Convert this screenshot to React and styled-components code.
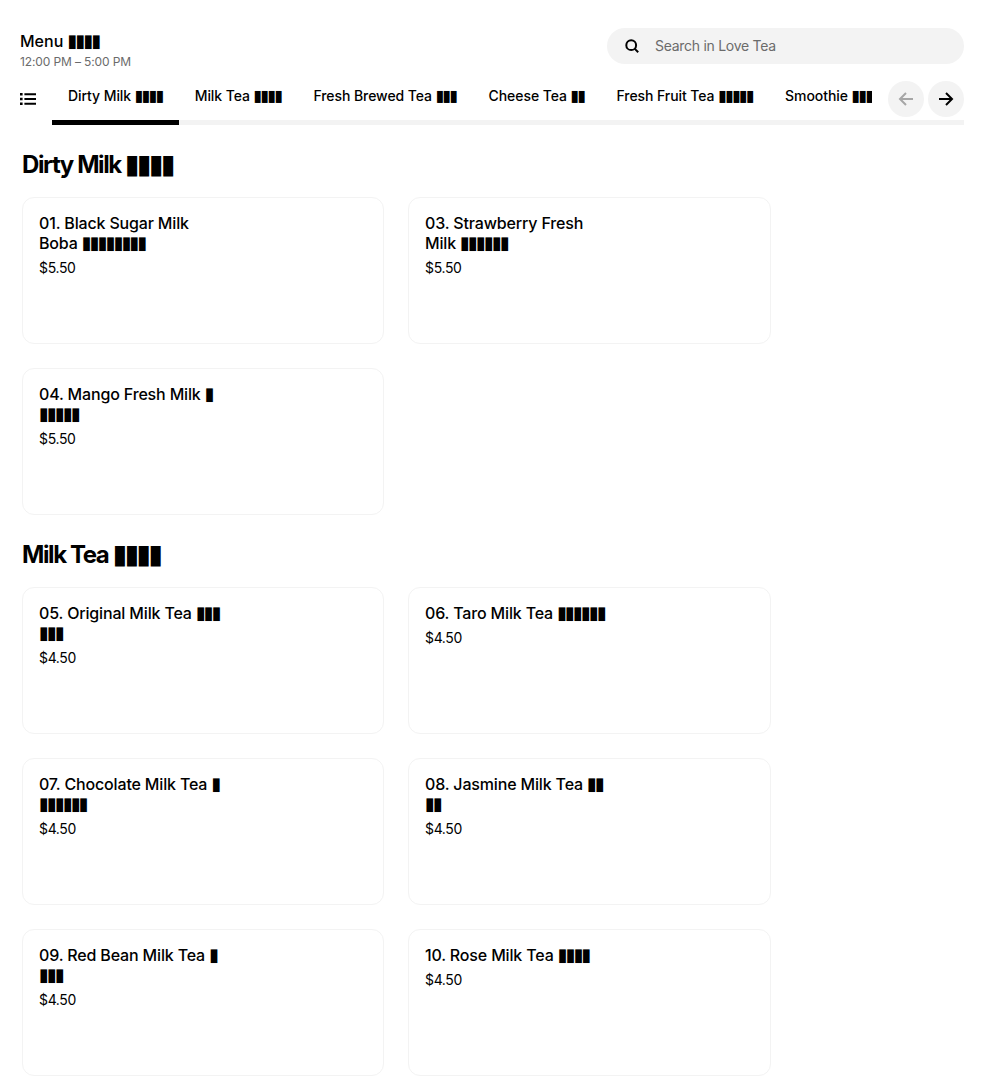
import styled, { createGlobalStyle } from "styled-components";

const GlobalStyle = createGlobalStyle`
  html, body {
    margin: 0;
    padding: 0;
    background: #fff;
    color: #000;
    font-family: "Inter", "Liberation Sans", sans-serif;
  }
`;

const Page = styled.div`
  width: 984px;
  height: 1086px;
  box-sizing: border-box;
  padding: 28px 20px 0;
  overflow: hidden;
`;

const Header = styled.header`
  display: flex;
  justify-content: space-between;
  align-items: flex-start;
  height: 53px;
`;

const Title = styled.div`
  font-size: 16px;
  line-height: 20px;
  font-weight: 500;
  margin-top: 3px;
`;

const Hours = styled.div`
  font-size: 12px;
  line-height: 16px;
  letter-spacing: -0.12px;
  color: #6b6b6b;
  margin-top: 3px;
`;

const Search = styled.div`
  width: 357px;
  height: 36px;
  border-radius: 18px;
  background: #f3f3f3;
  display: flex;
  align-items: center;
  gap: 16px;
  padding-left: 18px;
  padding-bottom: 1px;
  box-sizing: border-box;
  font-size: 14px;
  letter-spacing: -0.28px;
  color: #6b6b6b;
`;

const NavRow = styled.nav`
  display: flex;
  align-items: flex-start;
  height: 44px;
`;

const ListButton = styled.div`
  width: 32px;
  height: 36px;
  flex: none;
  display: flex;
  align-items: center;
`;

const TabArea = styled.div`
  flex: 1;
  min-width: 0;
  height: 44px;
  box-sizing: border-box;
  border-bottom: 5px solid #f3f3f3;
  display: flex;
  align-items: flex-start;
`;

const Tabs = styled.div`
  display: flex;
  flex: 1;
  min-width: 0;
  height: 44px;
  overflow: hidden;
`;

const Tab = styled.div`
  flex: none;
  height: 44px;
  padding: 7px 16px 0;
  box-sizing: border-box;
  font-size: 14px;
  line-height: 16px;
  font-weight: 500;
  letter-spacing: -0.07px;
  white-space: nowrap;
  border-bottom: 5px solid ${(p) => (p.$active ? "#000" : "transparent")};
`;

const Arrows = styled.div`
  display: flex;
  gap: 4px;
  flex: none;
  margin-left: 16px;
`;

const ArrowButton = styled.div`
  width: 36px;
  height: 36px;
  border-radius: 50%;
  background: #f3f3f3;
  display: flex;
  align-items: center;
  justify-content: center;
  color: ${(p) => (p.$disabled ? "#a6a6a6" : "#000")};
`;

const Section = styled.section`
  padding-left: 2px;
  margin-top: 24px;
`;

const Heading = styled.h2`
  margin: 0 0 16px;
  font-size: 24px;
  line-height: 32px;
  font-weight: 700;
  letter-spacing: -1.4px;
`;

const Grid = styled.div`
  display: grid;
  grid-template-columns: 362px 363px;
  gap: 24px;
`;

const Card = styled.article`
  height: 147px;
  box-sizing: border-box;
  border: 1px solid #f3f3f3;
  border-radius: 12px;
  padding: 15px 16px 16px;
`;

const ItemName = styled.div`
  max-width: 181px;
  font-size: 16px;
  line-height: 20px;
  font-weight: 500;
  letter-spacing: -0.16px;
`;

const Price = styled.div`
  margin-top: 5px;
  font-size: 14px;
  line-height: 20px;
  letter-spacing: -0.35px;
`;

const Missing = styled.span`
  font-family: "DejaVu Sans", sans-serif;
  font-size: 1.12em;
  line-height: 1;
  letter-spacing: -0.105em;
  word-break: break-all;
  font-weight: 400;
`;

const sections = [
  {
    title: "Dirty Milk ",
    blocks: 4,
    items: [
      ["01. Black Sugar Milk Boba ", 8, "$5.50"],
      ["03. Strawberry Fresh Milk ", 6, "$5.50"],
      ["04. Mango Fresh Milk ", 6, "$5.50"],
    ],
  },
  {
    title: "Milk Tea ",
    blocks: 4,
    items: [
      ["05. Original Milk Tea ", 6, "$4.50"],
      ["06. Taro Milk Tea ", 6, "$4.50"],
      ["07. Chocolate Milk Tea ", 7, "$4.50"],
      ["08. Jasmine Milk Tea ", 4, "$4.50"],
      ["09. Red Bean Milk Tea ", 4, "$4.50"],
      ["10. Rose Milk Tea ", 4, "$4.50"],
    ],
  },
];

const tabs = [
  ["Dirty Milk ", 4],
  ["Milk Tea ", 4],
  ["Fresh Brewed Tea ", 3],
  ["Cheese Tea ", 2],
  ["Fresh Fruit Tea ", 5],
  ["Smoothie ", 3],
];

const Blocks = ({ n }) => <Missing>{"▮".repeat(n)}</Missing>;

const ListIcon = () => (
  <svg width="16" height="16" viewBox="0 0 16 16" fill="currentColor">
    <path d="M0 2h2.6v2.4H0zM4.4 2.2H16v2H4.4zM0 6.8h2.6v2.4H0zM4.4 7h11.6v2H4.4zM0 11.6h2.6V14H0zM4.4 11.8H16v2H4.4z" />
  </svg>
);

const SearchIcon = () => (
  <svg width="14" height="14" viewBox="0 0 14 14" fill="none" stroke="#000" strokeWidth="2">
    <circle cx="6.2" cy="6.2" r="4.9" />
    <path d="M9.6 9.6L13.2 13.2" />
  </svg>
);

const ArrowIcon = ({ left }) => (
  <svg width="16" height="14" viewBox="0 0 16 14" fill="none" stroke="currentColor" strokeWidth="2">
    {left ? <path d="M15 7H2M8 1L2 7l6 6" /> : <path d="M1 7h13M8 1l6 6-6 6" />}
  </svg>
);

export default function App() {
  return (
    <Page>
      <GlobalStyle />
      <Header>
        <div>
          <Title>
            Menu <Blocks n={4} />
          </Title>
          <Hours>12:00 PM – 5:00 PM</Hours>
        </div>
        <Search>
          <SearchIcon />
          <span>Search in Love Tea</span>
        </Search>
      </Header>
      <NavRow>
        <ListButton>
          <ListIcon />
        </ListButton>
        <TabArea>
          <Tabs>
            {tabs.map(([label, n], i) => (
              <Tab key={label} $active={i === 0}>
                {label}
                <Blocks n={n} />
              </Tab>
            ))}
          </Tabs>
          <Arrows>
            <ArrowButton $disabled>
              <ArrowIcon left />
            </ArrowButton>
            <ArrowButton>
              <ArrowIcon />
            </ArrowButton>
          </Arrows>
        </TabArea>
      </NavRow>
      {sections.map((s) => (
        <Section key={s.title}>
          <Heading>
            {s.title}
            <Blocks n={s.blocks} />
          </Heading>
          <Grid>
            {s.items.map(([name, n, price]) => (
              <Card key={name}>
                <ItemName>
                  {name}
                  <Blocks n={n} />
                </ItemName>
                <Price>{price}</Price>
              </Card>
            ))}
          </Grid>
        </Section>
      ))}
    </Page>
  );
}
